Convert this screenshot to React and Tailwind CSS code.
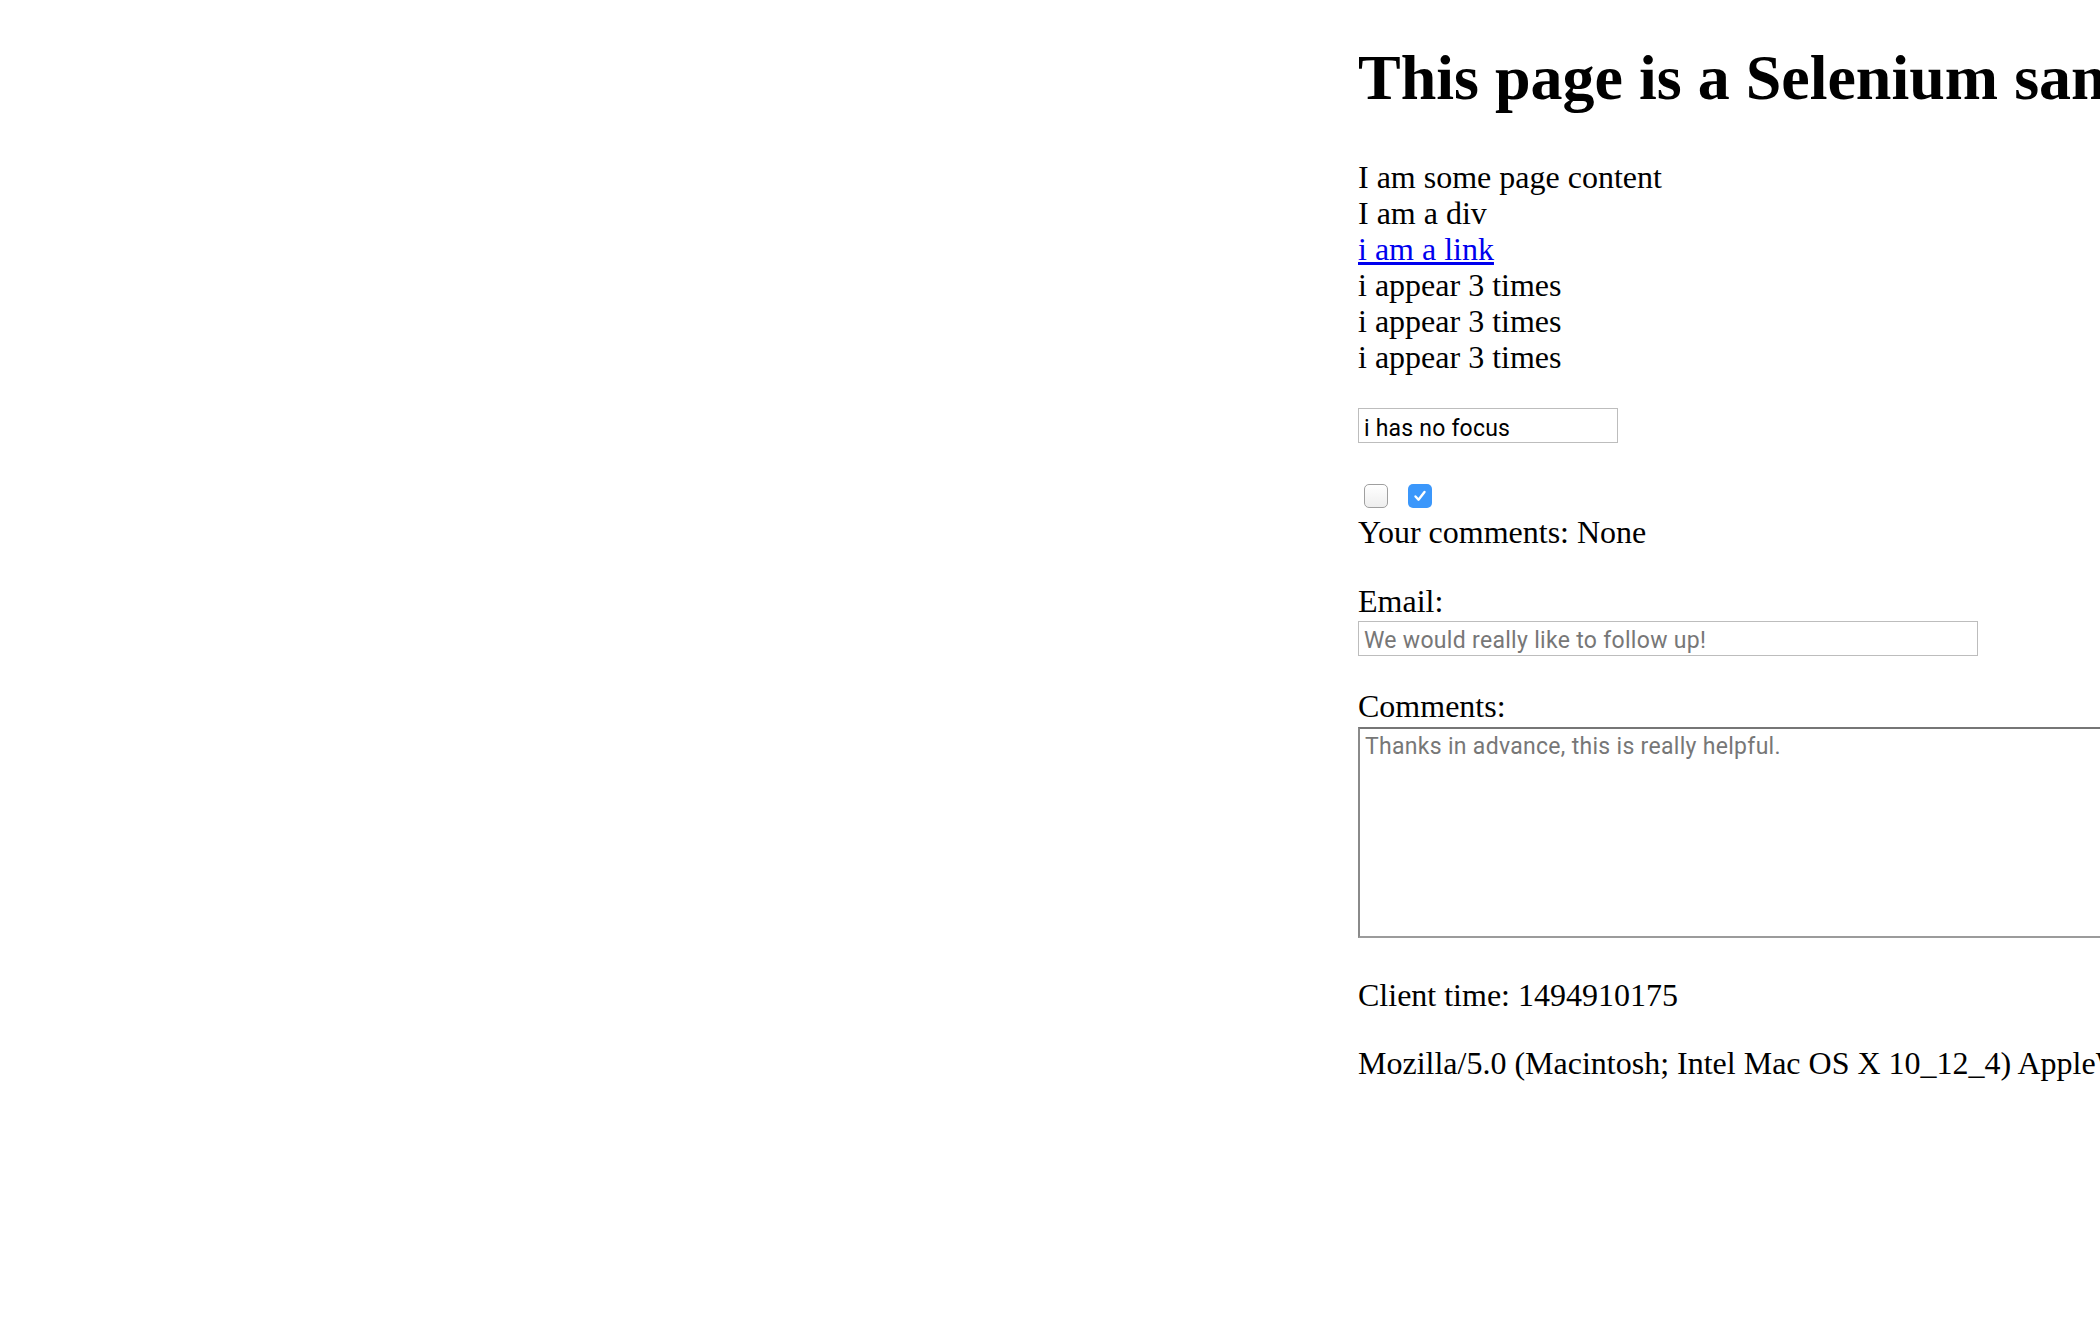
import React from "react";

const UA =
  "Mozilla/5.0 (Macintosh; Intel Mac OS X 10_12_4) AppleWebKit/603.1.30 (KHTML, like Gecko) Version/10.1 Safari/603.1.30";

function Checkbox({ checked }) {
  if (checked) {
    return (
      <span className="inline-flex h-[24px] w-[24px] items-center justify-center rounded-[5px] bg-[#3b97fb]">
        <svg width="16" height="16" viewBox="0 0 16 16" fill="none">
          <path d="M3.5 8.5l3 3.2L12.5 4" stroke="#fff" strokeWidth="2.4" strokeLinecap="round" strokeLinejoin="round" />
        </svg>
      </span>
    );
  }
  return (
    <span className="inline-block h-[24px] w-[24px] rounded-[5px] border border-[#9f9f9f] bg-gradient-to-b from-white to-[#eeeeee]" />
  );
}

export default function App() {
  return (
    <div className="h-[1322px] w-[2100px] overflow-hidden bg-white text-black font-['Liberation_Serif',serif]">
      <div className="pl-[1358px] pt-[41px]">
        <h1 className="whitespace-nowrap text-[64px] font-bold leading-[74px]">This page is a Selenium sandbox</h1>

        <div className="mt-[44px] text-[32px] leading-[36px]">
          <p>I am some page content</p>
          <div>I am a div</div>
          <div>
            <a href="#" className="text-[#0000ee] underline">i am a link</a>
          </div>
          <div>i appear 3 times</div>
          <div>i appear 3 times</div>
          <div>i appear 3 times</div>
        </div>

        <input
          type="text"
          defaultValue="i has no focus"
          className="mt-[33px] block h-[35px] w-[260px] border border-[#bdbdbd] px-[5px] pt-[5px] text-[23px] tracking-[0.2px] text-black outline-none font-['Roboto',sans-serif]"
        />

        <div className="mt-[35px] flex h-[36px] items-center gap-[20px] pl-[6px]">
          <Checkbox />
          <Checkbox checked />
        </div>

        <p className="text-[32px] leading-[36px]">Your comments: None</p>

        <div className="mt-[33px] text-[32px] leading-[36px]">Email:</div>
        <input
          type="email"
          placeholder="We would really like to follow up!"
          className="mt-[2px] block h-[35px] w-[620px] border border-[#bdbdbd] px-[5px] pt-[4px] text-[23px] tracking-[0.3px] outline-none placeholder:text-[#777] font-['Roboto',sans-serif]"
        />

        <div className="mt-[32px] text-[32px] leading-[36px]">Comments:</div>
        <textarea
          placeholder="Thanks in advance, this is really helpful."
          className="mt-[3px] block h-[211px] w-[900px] resize-none border-2 border-[#8a8a8a] border-t-[#767676] border-b-[#9b9b9b] px-[5px] pt-[1px] text-[23px] tracking-[0.3px] outline-none placeholder:text-[#777] font-['Roboto',sans-serif]"
        />

        <p className="mt-[39px] text-[32px] leading-[36px]">Client time: 1494910175</p>
        <p className="mt-[32px] whitespace-nowrap text-[32px] leading-[36px]">{UA}</p>
      </div>
    </div>
  );
}
